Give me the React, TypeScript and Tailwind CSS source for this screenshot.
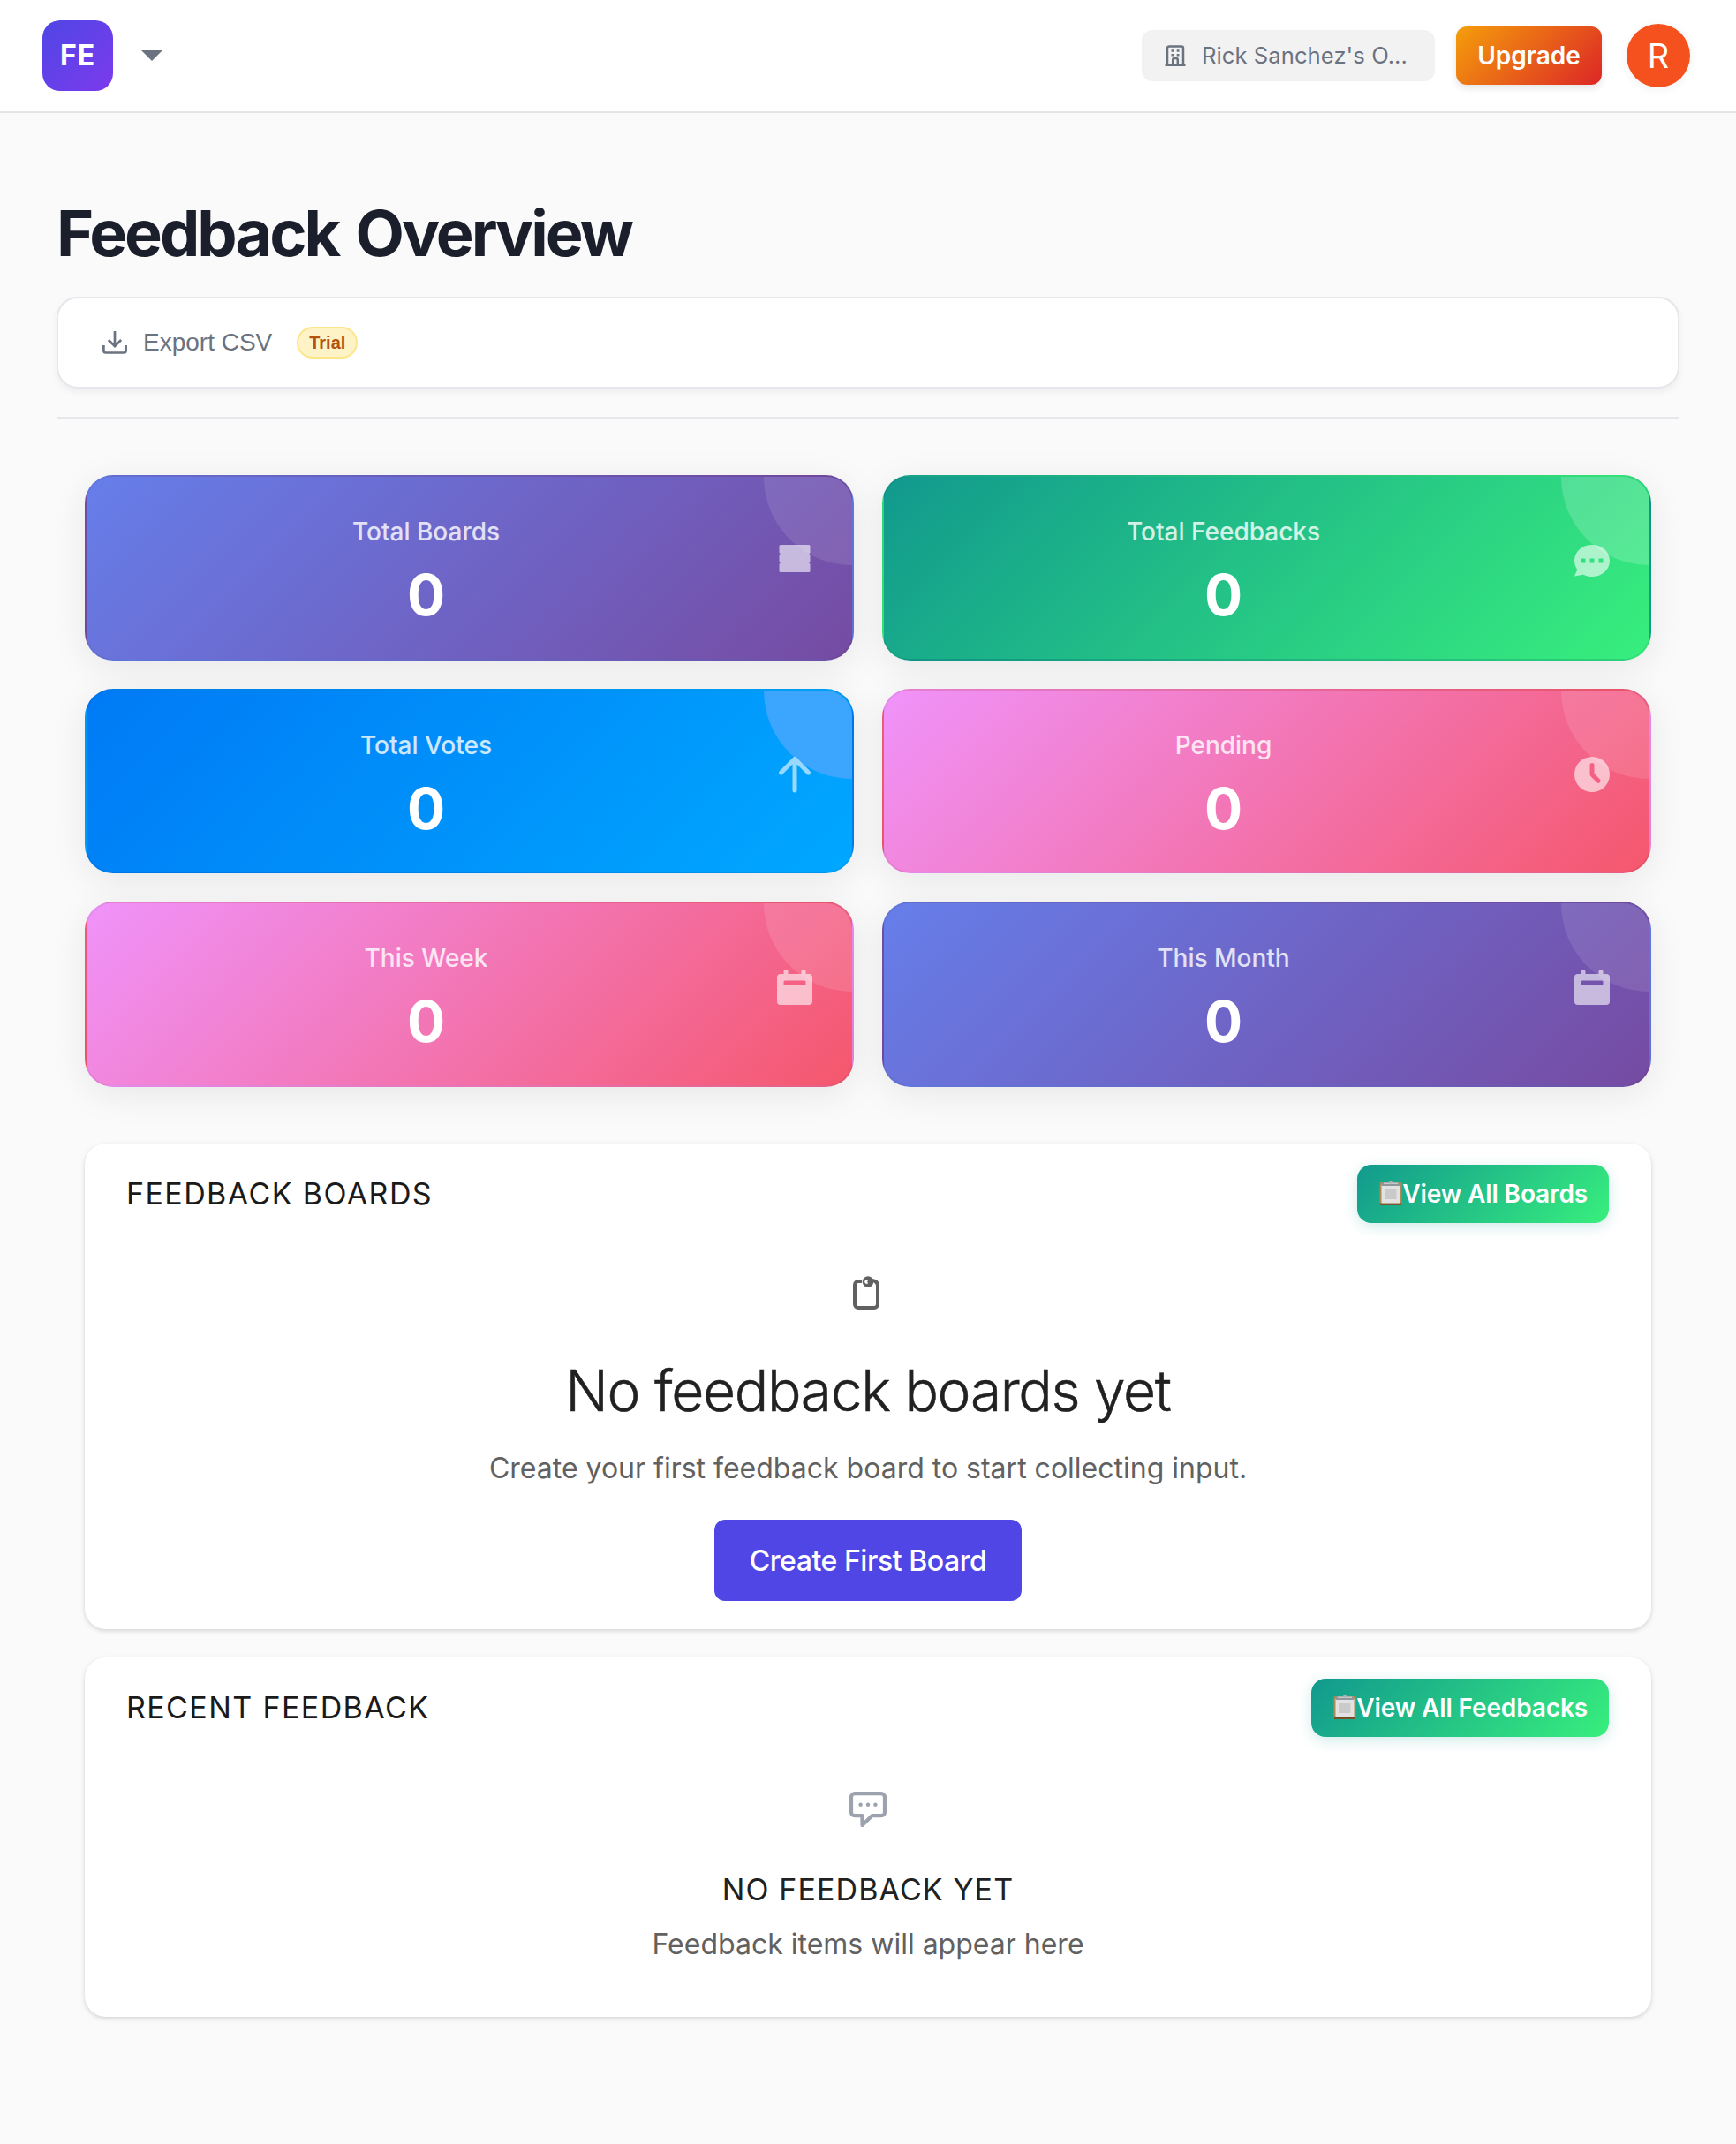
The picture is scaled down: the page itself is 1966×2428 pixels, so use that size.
import type { ReactNode } from "react";

const stats = [
  { label: "Total Boards", value: 0, icon: "ticket", bg: "bg-[linear-gradient(135deg,#667eea_0%,#764ba2_100%)]", glow: "bg-white/10" },
  { label: "Total Feedbacks", value: 0, icon: "chat", bg: "bg-[linear-gradient(135deg,#11998e_0%,#38ef7d_100%)]", glow: "bg-white/[0.18]" },
  { label: "Total Votes", value: 0, icon: "arrow", bg: "bg-[linear-gradient(135deg,#007af5_0%,#00a8ff_100%)]", glow: "bg-[#3ca6ff]" },
  { label: "Pending", value: 0, icon: "clock", bg: "bg-[linear-gradient(135deg,#f093fb_0%,#f5576c_100%)]", glow: "bg-white/[0.12]" },
  { label: "This Week", value: 0, icon: "calendar", bg: "bg-[linear-gradient(135deg,#f093fb_0%,#f5576c_100%)]", glow: "bg-white/[0.12]" },
  { label: "This Month", value: 0, icon: "calendar", bg: "bg-[linear-gradient(135deg,#667eea_0%,#764ba2_100%)]", glow: "bg-white/10" },
];

function StatIcon({ name }: { name: string }) {
  return (
    <svg viewBox="0 0 48 48" className="h-12 w-12" fill="currentColor">
      {name === "ticket" && (
        <path d="M8 6h32a1.500 1.500 0 0 1 1.500 1.500v7.300L40.300 16.300l1.200 1.500v7.300l-1.200 1.500 1.200 1.500v7.300a1.500 1.500 0 0 1-1.500 1.500H8a1.500 1.500 0 0 1-1.500-1.500v-7.300l1.200-1.500-1.200-1.500v-7.300l1.200-1.500-1.200-1.500V7.500A1.500 1.500 0 0 1 8 6z" />
      )}
      {name === "chat" && (
        <path
          fillRule="evenodd"
          d="M24 6c11 0 20 7.500 20 18s-9 18-20 18c-3.500 0-6.800-.8-9.700-2.300L4 41.500l3.300-7.600C5.200 31.100 4 27.700 4 24 4 13.500 13 6 24 6zM11.500 21.500v5h5v-5zm10 0v5h5v-5zm10 0v5h5v-5z"
        />
      )}
      {name === "arrow" && (
        <path d="M8.500 22L24 6.500 39.500 22M24 7v35" fill="none" stroke="currentColor" strokeWidth="5" strokeLinecap="round" strokeLinejoin="round" />
      )}
      {name === "clock" && (
        <path
          fillRule="evenodd"
          d="M24 4a20 20 0 1 1 0 40 20 20 0 0 1 0-40zm-2.500 9.500V24c0 .8.300 1.500.800 2l7 7a2.500 2.500 0 0 0 3.600-3.600L26.500 23v-9.500a2.500 2.500 0 0 0-5 0z"
        />
      )}
      {name === "calendar" && (
        <path
          fillRule="evenodd"
          d="M14 4a2.500 2.500 0 0 1 2.500 2.500V9h15V6.500a2.500 2.500 0 0 1 5 0V9H40a4 4 0 0 1 4 4v27a4 4 0 0 1-4 4H8a4 4 0 0 1-4-4V13a4 4 0 0 1 4-4h3.500V6.500A2.500 2.500 0 0 1 14 4zm-1 12.500a1.500 1.500 0 0 0-1.500 1.500v2.500A1.500 1.500 0 0 0 13 22h22a1.500 1.500 0 0 0 1.500-1.500V18a1.500 1.500 0 0 0-1.500-1.500z"
        />
      )}
    </svg>
  );
}

function Clipboard() {
  return (
    <svg viewBox="0 0 26 28" className="mb-0.5 ml-[1.500px] h-7 w-[26px] shrink-0">
      <rect x="0.500" y="2" width="25" height="26" rx="1.500" fill="#b08a55" />
      <rect x="1" y="25.500" width="24" height="2.300" fill="#6d4a26" />
      <rect x="2.500" y="5" width="21" height="20.500" fill="#e2e2e2" />
      <rect x="6" y="10" width="13.500" height="11" fill="#cacaca" />
      <rect x="3" y="2.500" width="20" height="3.500" fill="#8f979c" />
      <rect x="5" y="2.500" width="16" height="1.500" fill="#c3cacd" />
      <circle cx="13" cy="1.800" r="1.800" fill="#a9b3b6" />
    </svg>
  );
}

function StatCard({ label, value, icon, bg, glow }: (typeof stats)[number]) {
  return (
    <div className={`relative flex h-[209.5px] items-start gap-[49px] overflow-hidden rounded-[32px] border-2 border-black/5 py-10 pr-[41px] pl-10 shadow-[0_8px_40px_rgba(0,0,0,0.08)] ${bg}`}>
      <div className={`absolute -top-[100px] -right-[100px] h-[200px] w-[200px] rounded-full ${glow}`} />
      <div className="flex-1 text-center">
        <div className="text-[28px] leading-[44px] font-medium text-white/80">{label}</div>
        <div className="mt-[18px] text-[64px] leading-[63px] font-bold text-white">{value}</div>
      </div>
      <div className="relative mt-[31px] text-white/60">
        <StatIcon name={icon} />
      </div>
    </div>
  );
}

function Section({ title, action, className, children }: { title: string; action: string; className: string; children: ReactNode }) {
  return (
    <section className={`rounded-[24px] bg-white px-12 pt-6 shadow-[0_2px_6px_rgba(0,0,0,0.1),0_2px_4px_rgba(0,0,0,0.06)] ${className}`}>
      <div className="flex items-center justify-between">
        <h2 className="-ml-px text-[34px] leading-[48px] font-normal tracking-[1.4px] text-[#1a1a1a]">{title}</h2>
        <button className="flex h-[66px] items-center rounded-[16px] bg-[linear-gradient(135deg,#11998e_0%,#38ef7d_100%)] px-6 text-[28px] font-semibold tracking-[-0.13px] text-white shadow-[0_4px_16px_rgba(17,153,142,0.2)]">
          <Clipboard />
          {action}
        </button>
      </div>
      <div className="flex flex-col items-center">{children}</div>
    </section>
  );
}

export default function App() {
  return (
    <div className="h-[2428px] w-[1966px] overflow-hidden bg-[#fafafa] font-['Inter',sans-serif]">
      <header className="flex h-32 items-center border-b-2 border-[#e5e5e5] bg-white pr-[52px] pl-12">
        <div className="flex h-20 w-20 items-center justify-center rounded-[20px] bg-[linear-gradient(135deg,#4f46e5_0%,#7c3aed_100%)] text-[32px] font-bold tracking-[1px] text-white">
          FE
        </div>
        <svg viewBox="0 0 24 12" className="ml-8 h-3 w-6" fill="#6b7280">
          <path d="M0 0h24L12 12z" />
        </svg>

        <div className="ml-auto flex h-[58px] w-[332px] items-center rounded-[12px] bg-[#f2f2f2] pl-[26px] text-[25.6px] tracking-[0.06px] text-[#6b7280]">
          <svg viewBox="0 0 24 24" className="mr-[18px] h-6 w-6" fill="none" stroke="currentColor" strokeWidth="2.500">
            <path d="M0.500 22.700h23M3 22V3.500a2 2 0 0 1 2-2h14a2 2 0 0 1 2 2V22M9.200 22v-5a2 2 0 0 1 2-2h1.600a2 2 0 0 1 2 2v5" />
            <path d="M7.500 6.500h2.800M13.700 6.500h2.800M7.500 11.200h2.800M13.700 11.200h2.800" />
          </svg>
          <span className="whitespace-nowrap">Rick Sanchez&apos;s O...</span>
        </div>
        <button className="ml-6 flex h-[66px] w-[165px] items-center justify-center rounded-[12px] bg-[linear-gradient(135deg,#f59e0b_0%,#dc2626_100%)] text-[28px] font-semibold text-white shadow-[0_4px_8px_rgba(0,0,0,0.1)]">
          Upgrade
        </button>
        <div className="ml-7 flex h-[72px] w-[72px] items-center justify-center rounded-full bg-[#f4511e] text-[38px] text-white shadow-[0_2px_6px_4px_rgba(0,0,0,0.03)]">
          R
        </div>
      </header>

      <main className="px-16 pt-[95px]">
        <h1 className="text-[72px] leading-[81px] font-bold tracking-[-3px] text-[#1a1f2b] [word-spacing:5px]">Feedback Overview</h1>

        <div className="mt-8 flex h-[104px] items-center rounded-[24px] border-2 border-[#e5e7eb] bg-white px-[50px] shadow-[0_4px_8px_rgba(0,0,0,0.05)]">
          <svg viewBox="0 0 28 26" className="h-[26px] w-7" fill="none" stroke="#6b7280" strokeWidth="2.700">
            <path d="M14 0v17M6.800 10l7.200 7 7.200-7M1.400 16v6a2.500 2.500 0 0 0 2.500 2.500h20.200a2.500 2.500 0 0 0 2.500-2.500v-6" />
          </svg>
          <span className="ml-[18px] font-['Liberation_Sans',sans-serif] text-[28px] text-[#6b7280]">Export CSV</span>
          <span className="ml-7 flex h-9 w-[69px] items-center justify-center rounded-full border-2 border-[#fde68a] bg-[#fef3c7] font-['Liberation_Sans',sans-serif] text-[20px] font-bold text-[#b45309]">
            Trial
          </span>
        </div>

        <hr className="mt-8 border-t-2 border-[#e5e7eb]" />

        <div className="px-8 pt-16">
          <div className="grid grid-cols-2 gap-8">
            {stats.map((s) => (
              <StatCard key={s.label} {...s} />
            ))}
          </div>

          <Section title="FEEDBACK BOARDS" action="View All Boards" className="mt-16 h-[550.5px]">
            <svg viewBox="0 0 30 38" className="mt-[60px] mr-1 h-[38px] w-[30px]" fill="none" stroke="#616161" strokeWidth="4">
              <path d="M10 6H6a4 4 0 0 0-4 4v22a4 4 0 0 0 4 4h18a4 4 0 0 0 4-4V10a4 4 0 0 0-4-4" />
              <circle cx="17" cy="6.500" r="6.300" fill="#616161" stroke="none" />
              <path d="M16.500 4.800a2 2 0 1 0 0 3.500 3 3 0 0 1 0-3.500z" fill="#fff" stroke="#fff" strokeWidth="0.800" />
              <path d="M21 5c4 0 7 2 7 6" />
            </svg>
            <h3 className="mt-[52px] text-[64px] leading-[80px] font-light tracking-[-1.3px] text-[#212121] [-webkit-text-stroke:0.5px_#212121]">No feedback boards yet</h3>
            <p className="mt-7 text-[32px] leading-[40px] text-[#616161]">Create your first feedback board to start collecting input.</p>
            <button className="mt-[38px] h-[92px] w-[348px] rounded-[12px] bg-[#4f46e5] pt-0.5 text-[32px] font-medium tracking-[-0.45px] text-white">
              Create First Board
            </button>
          </Section>

          <Section title="RECENT FEEDBACK" action="View All Feedbacks" className="mt-8 h-[407px]">
            <svg viewBox="0 0 42 40" className="mt-[62px] h-10 w-[42px]" fill="none" stroke="#9ca3af" strokeWidth="4.200" strokeLinejoin="round">
              <path d="M6 2.200h30a4 4 0 0 1 4 4v17a4 4 0 0 1-4 4H25.500L14.500 38V27.200H6a4 4 0 0 1-4-4v-17a4 4 0 0 1 4-4z" />
              <g fill="#9ca3af" stroke="none">
                <circle cx="12.600" cy="14.700" r="2.200" />
                <circle cx="21" cy="14.700" r="2.200" />
                <circle cx="29.400" cy="14.700" r="2.200" />
              </g>
            </svg>
            <h3 className="mt-[47px] text-[34px] leading-[48px] font-normal tracking-[1.1px] text-[#212121]">NO FEEDBACK YET</h3>
            <p className="mt-[18px] text-[32px] leading-[40px] text-[#616161]">Feedback items will appear here</p>
          </Section>
        </div>
      </main>
    </div>
  );
}
